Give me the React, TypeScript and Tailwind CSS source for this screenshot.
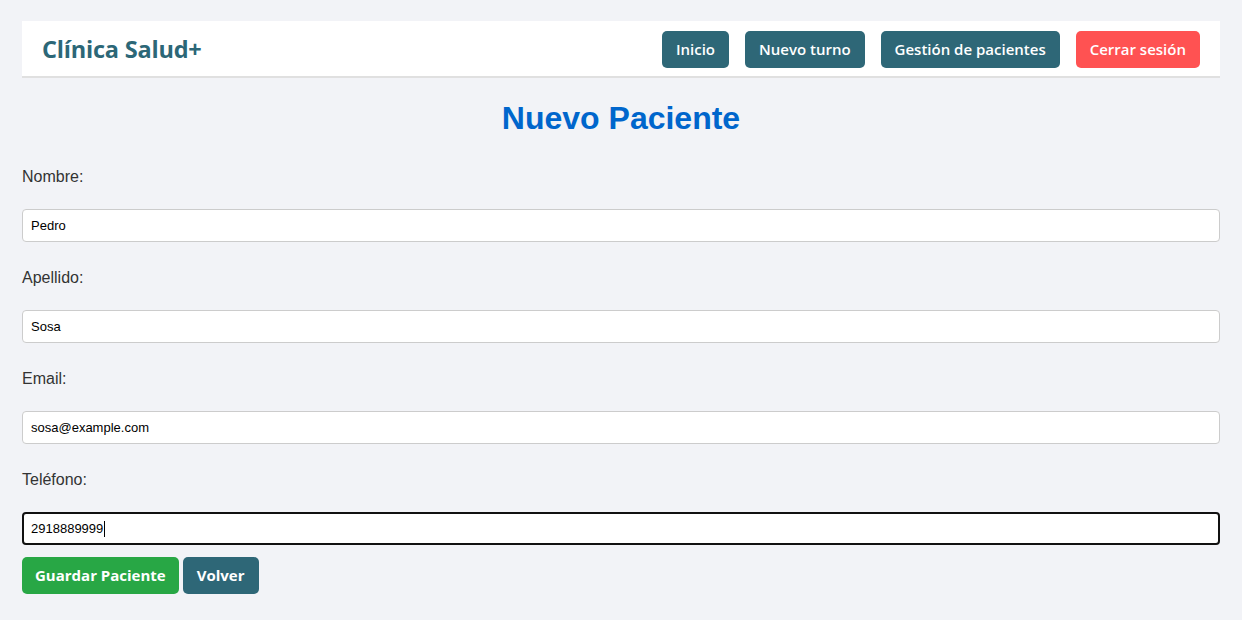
import React from "react";

const navFont = { fontFamily: '"Open Sans", "Noto Sans", sans-serif' };

export default function App() {
  const fields = [
    { label: "Nombre:", value: "Pedro" },
    { label: "Apellido:", value: "Sosa" },
    { label: "Email:", value: "sosa@example.com" },
  ];
  return (
    <div className="min-h-[620px] bg-[#f2f3f7] px-[22px] pt-[21px] pb-4 font-['Liberation_Sans',Arial,sans-serif]">
      <header className="flex h-[57px] items-center justify-between border-b-2 border-[#e0e0e0] bg-white pt-[2px] pl-[20px] pr-[20px]">
        <div className="text-[23.5px] font-bold tracking-[-0.2px] text-[#2c6777]" style={navFont}>
          Clínica Salud+
        </div>
        <nav className="flex gap-4" style={navFont}>
          <button className="h-[37px] rounded-[5px] bg-[#2e6777] px-[14px] text-[15px] font-semibold text-white">Inicio</button>
          <button className="h-[37px] rounded-[5px] bg-[#2e6777] px-[14px] text-[15px] font-semibold text-white">Nuevo turno</button>
          <button className="h-[37px] rounded-[5px] bg-[#2e6777] px-[14px] text-[15px] font-semibold text-white">Gestión de pacientes</button>
          <button className="h-[37px] rounded-[5px] bg-[#ff5252] px-[14px] text-[15px] font-semibold text-white">Cerrar sesión</button>
        </nav>
      </header>
      <h1 className="mt-[22px] text-center text-[32px] leading-[37px] font-bold text-[#0066cc]">Nuevo Paciente</h1>
      <form className="mt-[31px]" onSubmit={(e) => e.preventDefault()}>
        {fields.map((f) => (
          <div key={f.label} className="mb-[27px]">
            <label className="block text-[16px] leading-[18px] text-[#333]">{f.label}</label>
            <input
              readOnly
              value={f.value}
              className="mt-[23px] block h-[33px] w-full rounded-[4px] border border-[#ccc] bg-white px-[8px] text-[13px] text-black outline-none"
            />
          </div>
        ))}
        <div>
          <label className="block text-[16px] leading-[18px] text-[#333]">Teléfono:</label>
          <div className="mt-[23px] flex h-[33px] w-full items-center rounded-[4px] border-2 border-[#111] bg-white px-[7px] text-[13px] text-black">
            <span>2918889999</span>
            <span className="ml-[1px] h-[16px] w-[1px] bg-black" />
          </div>
        </div>
        <div className="mt-[12px] flex gap-[4px]" style={navFont}>
          <button className="h-[37px] rounded-[5px] bg-[#28a745] px-[13px] text-[15px] font-bold text-white">Guardar Paciente</button>
          <button className="h-[37px] rounded-[5px] bg-[#2e6777] px-[14px] text-[15px] font-bold text-white">Volver</button>
        </div>
      </form>
    </div>
  );
}
